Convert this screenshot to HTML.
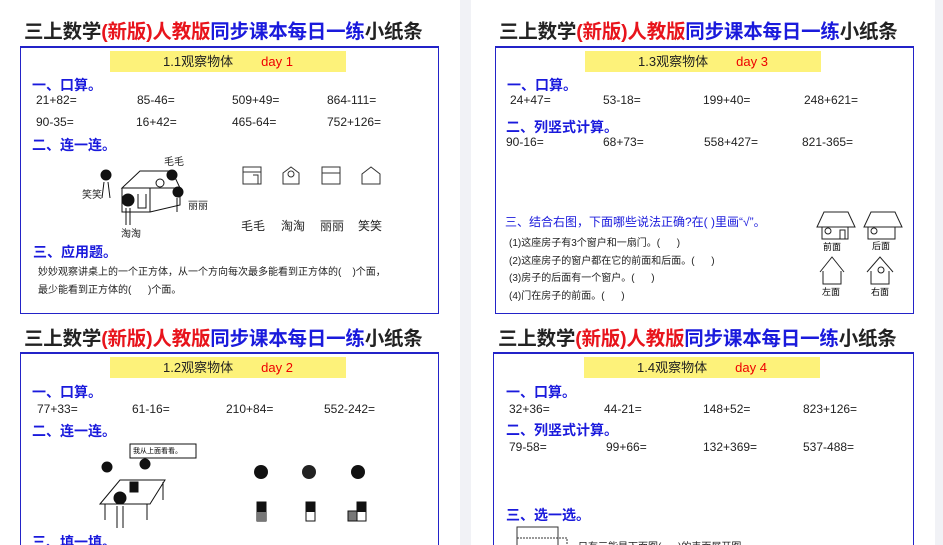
<!DOCTYPE html>
<html><head><meta charset="utf-8"><style>
*{margin:0;padding:0;box-sizing:border-box}
html,body{width:943px;height:545px;overflow:hidden}
body{background:#f1f2f6;position:relative;font-family:"Liberation Sans","Noto Sans CJK SC",sans-serif}
.card{position:absolute;top:0;height:545px;background:#fff}
.a{position:absolute;white-space:nowrap}
.t{font-size:19.5px;font-weight:bold;color:#222;letter-spacing:-0.2px}
.t .r{color:#e8141c}.t .b{color:#1a1adc}
.box{position:absolute;border:1.5px solid #2323c8;border-top-width:2px}
.y{position:absolute;background:#fdf27a;height:21px;font-size:13px;color:#222;text-align:center;line-height:21px}
.y span{color:#e00;margin-left:28px}
.h{font-size:14px;font-weight:bold;color:#1a1adc}
.n{font-size:12px;color:#222}
.s{font-size:10px;color:#222}
</style></head><body>
<div class="card" style="left:0;width:460px"></div>
<div class="card" style="left:471px;width:464px"></div>

<!-- Left top -->
<div class="a t" style="left:24px;top:15px">三上数学<span class="r">(新版)人教版</span><span class="b">同步课本每日一练</span>小纸条</div>
<div class="box" style="left:20px;top:46px;width:419px;height:268px"></div>
<div class="y" style="left:110px;top:51px;width:236px">1.1观察物体<span>day 1</span></div>
<div class="a h" style="left:32px;top:75px">一、口算。</div>
<div class="a n" style="left:36px;top:93px">21+82=</div><div class="a n" style="left:137px;top:93px">85-46=</div><div class="a n" style="left:232px;top:93px">509+49=</div><div class="a n" style="left:327px;top:93px">864-111=</div>
<div class="a n" style="left:36px;top:115px">90-35=</div><div class="a n" style="left:136px;top:115px">16+42=</div><div class="a n" style="left:232px;top:115px">465-64=</div><div class="a n" style="left:327px;top:115px">752+126=</div>
<div class="a h" style="left:32px;top:135px">二、连一连。</div>
<svg class="a" style="left:80px;top:150px" width="135" height="90" viewBox="0 0 135 90" fill="none" stroke="#111" stroke-width="1">
<path d="M42 38 L60 21 L92 21 L100 38 L42 38 Z M42 38 V62 H70 V38 M70 62 L100 55 V38 M58 44 V58 H66 V44"/>
<circle cx="80" cy="33" r="4"/>
<circle cx="26" cy="25" r="5" fill="#111"/><path d="M24 32 L22 48 M28 32 L30 48"/>
<circle cx="48" cy="50" r="6" fill="#111"/><path d="M46 58 V75 M50 58 V75"/>
<circle cx="92" cy="25" r="5" fill="#111"/><circle cx="98" cy="42" r="5" fill="#111"/><path d="M97 48 V62"/>
</svg>
<div class="a s" style="left:164px;top:153px">毛毛</div>
<div class="a s" style="left:82px;top:186px">笑笑</div>
<div class="a s" style="left:188px;top:197px">丽丽</div>
<div class="a s" style="left:121px;top:225px">淘淘</div>
<svg class="a" style="left:240px;top:164px" width="145" height="24" fill="none" stroke="#333" stroke-width="1">
<rect x="3" y="3" width="18" height="17"/><path d="M3 8 H21 M13 11 H18 V20"/>
<path d="M43 20 V9 L51 3 L59 9 V20 Z"/><circle cx="51" cy="10" r="3"/>
<rect x="82" y="3" width="18" height="17"/><path d="M82 9 H100"/>
<path d="M122 20 V10 L131 3 L140 10 V20 Z"/>
</svg>
<div class="a n" style="left:241px;top:217px">毛毛</div><div class="a n" style="left:281px;top:217px">淘淘</div><div class="a n" style="left:320px;top:217px">丽丽</div><div class="a n" style="left:358px;top:217px">笑笑</div>
<div class="a h" style="left:33px;top:242px">三、应用题。</div>
<div class="a s" style="left:38px;top:263px">妙妙观察讲桌上的一个正方体，从一个方向每次最多能看到正方体的(&nbsp;&nbsp;&nbsp;&nbsp;)个面，</div>
<div class="a s" style="left:38px;top:281px">最少能看到正方体的(&nbsp;&nbsp;&nbsp;&nbsp;&nbsp;&nbsp;)个面。</div>

<!-- Right top -->
<div class="a t" style="left:499px;top:15px">三上数学<span class="r">(新版)人教版</span><span class="b">同步课本每日一练</span>小纸条</div>
<div class="box" style="left:495px;top:46px;width:419px;height:268px"></div>
<div class="y" style="left:585px;top:51px;width:236px">1.3观察物体<span>day 3</span></div>
<div class="a h" style="left:507px;top:75px">一、口算。</div>
<div class="a n" style="left:510px;top:93px">24+47=</div><div class="a n" style="left:603px;top:93px">53-18=</div><div class="a n" style="left:703px;top:93px">199+40=</div><div class="a n" style="left:804px;top:93px">248+621=</div>
<div class="a h" style="left:506px;top:117px">二、列竖式计算。</div>
<div class="a n" style="left:506px;top:135px">90-16=</div><div class="a n" style="left:603px;top:135px">68+73=</div><div class="a n" style="left:704px;top:135px">558+427=</div><div class="a n" style="left:802px;top:135px">821-365=</div>
<div class="a" style="left:505px;top:213px;font-size:12px;color:#1a1adc">三、结合右图，下面哪些说法正确?在(&nbsp;)里画“√”。</div>
<div class="a s" style="left:509px;top:234px">(1)这座房子有3个窗户和一扇门。(&nbsp;&nbsp;&nbsp;&nbsp;&nbsp;&nbsp;)</div>
<div class="a s" style="left:509px;top:252px">(2)这座房子的窗户都在它的前面和后面。(&nbsp;&nbsp;&nbsp;&nbsp;&nbsp;&nbsp;)</div>
<div class="a s" style="left:509px;top:269px">(3)房子的后面有一个窗户。(&nbsp;&nbsp;&nbsp;&nbsp;&nbsp;&nbsp;)</div>
<div class="a s" style="left:509px;top:287px">(4)门在房子的前面。(&nbsp;&nbsp;&nbsp;&nbsp;&nbsp;&nbsp;)</div>
<svg class="a" style="left:812px;top:209px" width="95" height="90" fill="none" stroke="#222" stroke-width="1">
<path d="M5 18 L12 3 H36 L43 18 Z M10 18 V30 H36 V18 M28 30 V21 H33 V30"/><circle cx="16" cy="22" r="3"/>
<path d="M52 18 L59 3 H83 L90 18 Z M56 18 V30 H83 V18"/><circle cx="62" cy="22" r="3"/>
<path d="M8 63 L20 48 L32 63 M11 62 V75 H29 V62"/>
<path d="M55 63 L68 48 L81 63 M59 62 V75 H77 V62"/><circle cx="69" cy="61" r="3"/>
</svg>
<div class="a" style="left:823px;top:240px;font-size:9px">前面</div><div class="a" style="left:872px;top:239px;font-size:9px">后面</div>
<div class="a" style="left:822px;top:285px;font-size:9px">左面</div><div class="a" style="left:871px;top:285px;font-size:9px">右面</div>

<!-- Left bottom -->
<div class="a t" style="left:24px;top:322px">三上数学<span class="r">(新版)人教版</span><span class="b">同步课本每日一练</span>小纸条</div>
<div class="box" style="left:20px;top:352px;width:419px;height:200px"></div>
<div class="y" style="left:110px;top:357px;width:236px">1.2观察物体<span>day 2</span></div>
<div class="a h" style="left:32px;top:382px">一、口算。</div>
<div class="a n" style="left:37px;top:402px">77+33=</div><div class="a n" style="left:132px;top:402px">61-16=</div><div class="a n" style="left:226px;top:402px">210+84=</div><div class="a n" style="left:324px;top:402px">552-242=</div>
<div class="a h" style="left:32px;top:421px">二、连一连。</div>
<svg class="a" style="left:95px;top:440px" width="110" height="90" fill="none" stroke="#111" stroke-width="1">
<rect x="35" y="4" width="66" height="14" fill="#fff"/>
<path d="M5 64 L25 40 H70 L55 64 Z M10 64 V80 M52 64 V80 M68 42 V60"/>
<circle cx="12" cy="27" r="5" fill="#111"/><circle cx="50" cy="24" r="5" fill="#111"/><circle cx="25" cy="58" r="6" fill="#111"/>
<rect x="35" y="42" width="8" height="10" fill="#111"/><path d="M22 66 V88 M28 66 V88"/>
</svg>
<div class="a" style="left:133px;top:446px;font-size:7px">我从上面看看。</div>
<svg class="a" style="left:250px;top:462px" width="120" height="62">
<circle cx="11" cy="10" r="7" fill="#111"/><circle cx="59" cy="10" r="7" fill="#222"/><circle cx="108" cy="10" r="7" fill="#111"/>
<rect x="7" y="40" width="9" height="19" fill="#fff" stroke="#111"/><rect x="7" y="40" width="9" height="10" fill="#111"/><rect x="7" y="50" width="9" height="9" fill="#777"/>
<rect x="56" y="40" width="9" height="19" fill="#fff" stroke="#111"/><rect x="56" y="40" width="9" height="10" fill="#111"/>
<rect x="98" y="49" width="9" height="10" fill="#777" stroke="#111"/><rect x="107" y="40" width="9" height="19" fill="#fff" stroke="#111"/><rect x="107" y="40" width="9" height="10" fill="#111"/>
</svg>
<div class="a h" style="left:32px;top:532px">三、填一填。</div>

<!-- Right bottom -->
<div class="a t" style="left:498px;top:322px">三上数学<span class="r">(新版)人教版</span><span class="b">同步课本每日一练</span>小纸条</div>
<div class="box" style="left:493px;top:352px;width:421px;height:200px"></div>
<div class="y" style="left:584px;top:357px;width:236px">1.4观察物体<span>day 4</span></div>
<div class="a h" style="left:506px;top:382px">一、口算。</div>
<div class="a n" style="left:509px;top:402px">32+36=</div><div class="a n" style="left:604px;top:402px">44-21=</div><div class="a n" style="left:703px;top:402px">148+52=</div><div class="a n" style="left:803px;top:402px">823+126=</div>
<div class="a h" style="left:506px;top:420px">二、列竖式计算。</div>
<div class="a n" style="left:509px;top:440px">79-58=</div><div class="a n" style="left:606px;top:440px">99+66=</div><div class="a n" style="left:703px;top:440px">132+369=</div><div class="a n" style="left:803px;top:440px">537-488=</div>
<div class="a h" style="left:506px;top:505px">三、选一选。</div>
<svg class="a" style="left:515px;top:526px" width="60" height="20" fill="none" stroke="#333"><rect x="2" y="1" width="41" height="30"/><path d="M2 12 H52 V30" stroke-dasharray="2 1"/></svg>
<div class="a s" style="left:578px;top:538px">只有三能是下面图(&nbsp;&nbsp;&nbsp;&nbsp;&nbsp;&nbsp;)的表面展开图</div>
</body></html>
